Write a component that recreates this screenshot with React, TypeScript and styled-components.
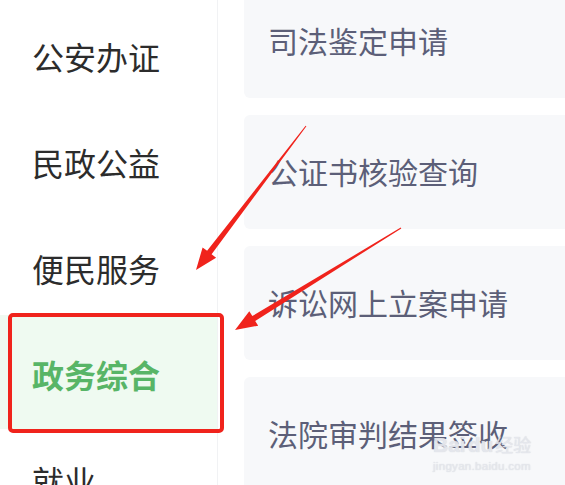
import React from "react";
import styled, { createGlobalStyle } from "styled-components";

const Global = createGlobalStyle`
  html, body { margin: 0; padding: 0; background: #ffffff; }
  body { width: 565px; height: 485px; overflow: hidden; font-family: "Noto Sans CJK SC", "Noto Sans", sans-serif; }
  #root { width: 565px; height: 485px; }
`;

const Page = styled.div`
  position: relative;
  display: flex;
  width: 565px;
  height: 485px;
  overflow: hidden;
  background: #ffffff;
`;

const Sidebar = styled.nav`
  flex: 0 0 217px;
  display: flex;
  flex-direction: column;
  padding-top: 5px;
  border-right: 1px solid #f1f2f4;
  background: #ffffff;
`;

const NavItem = styled.div<{ $active?: boolean }>`
  position: relative;
  display: flex;
  align-items: center;
  flex: 0 0 auto;
  height: ${(p) => (p.$active ? "114px" : "106px")};
  margin-top: ${(p) => (p.$active ? "-8px" : "0")};
  padding: ${(p) => (p.$active ? "8px 0 4px 32px" : "0 0 4px 32px")};
  box-sizing: border-box;
  font-size: 32px;
  line-height: 1;
  color: ${(p) => (p.$active ? "#58b567" : "#2c2c2c")};
  font-weight: ${(p) => (p.$active ? 600 : 400)};
  background: ${(p) => (p.$active ? "#effaf1" : "transparent")};
  white-space: nowrap;
`;

const RedFrame = styled.div`
  position: absolute;
  left: 8px;
  top: -2px;
  width: 216px;
  height: 120px;
  box-sizing: border-box;
  border: 4px solid #f0231c;
  border-radius: 5px;
  pointer-events: none;
`;

const Content = styled.main`
  flex: 1 1 auto;
  display: flex;
  flex-direction: column;
  gap: 17px;
  padding-left: 26px;
  margin-top: -16px;
`;

const Card = styled.div`
  flex: 0 0 114px;
  display: flex;
  align-items: center;
  box-sizing: border-box;
  padding: 0 0 3px 24px;
  background: #f7f8fa;
  border-radius: 6px 0 0 6px;
  font-size: 30px;
  line-height: 1;
  color: #5c5f78;
  white-space: nowrap;
`;

const Overlay = styled.svg`
  position: absolute;
  left: 0;
  top: 0;
  width: 565px;
  height: 485px;
  pointer-events: none;
`;

const Watermark = styled.div`
  position: absolute;
  left: 433px;
  top: 434px;
  display: flex;
  flex-direction: column;
  align-items: flex-start;
  color: rgba(232, 234, 240, 0.85);
  font-family: "Liberation Sans", Arial, sans-serif;
  text-shadow: 0 0 1px rgba(190, 192, 200, 0.7);
  pointer-events: none;
`;

const MarkTop = styled.div`
  display: flex;
  align-items: baseline;
  gap: 2px;
  font-size: 21px;
  font-weight: 700;
  line-height: 1;
`;

const MarkCn = styled.span`
  font-family: "Noto Sans CJK SC", sans-serif;
  font-size: 18px;
  font-weight: 400;
`;

const MarkUrl = styled.div`
  margin-top: 6px;
  font-size: 11.5px;
  line-height: 1;
  letter-spacing: 0.3px;
`;

function arrow(sx: number, sy: number, tx: number, ty: number, headLen: number, headHalf: number, shaftW: number) {
  const dx = tx - sx;
  const dy = ty - sy;
  const len = Math.hypot(dx, dy);
  const ux = dx / len;
  const uy = dy / len;
  const px = -uy;
  const py = ux;
  const bx = tx - ux * headLen;
  const by = ty - uy * headLen;
  const pts = [
    [sx + px * 0.5, sy + py * 0.5],
    [bx + px * shaftW, by + py * shaftW],
    [bx + px * headHalf, by + py * headHalf],
    [tx, ty],
    [bx - px * headHalf, by - py * headHalf],
    [bx - px * shaftW, by - py * shaftW],
    [sx - px * 0.5, sy - py * 0.5],
  ];
  return pts.map((p) => p.map((v) => v.toFixed(1)).join(",")).join(" ");
}

const navItems = ["公安办证", "民政公益", "便民服务", "政务综合", "就业"];
const cards = ["司法鉴定申请", "公证书核验查询", "诉讼网上立案申请", "法院审判结果签收"];

export default function App() {
  return (
    <>
      <Global />
      <Page>
        <Sidebar>
          {navItems.map((t) => (
            <NavItem key={t} $active={t === "政务综合"}>
              {t}
              {t === "政务综合" && <RedFrame />}
            </NavItem>
          ))}
        </Sidebar>
        <Content>
          {cards.map((c) => (
            <Card key={c}>{c}</Card>
          ))}
        </Content>
        <Watermark>
          <MarkTop>
            <span>Bai</span>
            <span>du</span>
            <MarkCn>经验</MarkCn>
          </MarkTop>
          <MarkUrl>jingyan.baidu.com</MarkUrl>
        </Watermark>
        <Overlay viewBox="0 0 565 485">
          <polygon points={arrow(306, 126, 196, 270, 22, 8.5, 2.8)} fill="#f0231c" />
          <polygon points={arrow(401, 228, 235, 330, 22, 8.5, 2.8)} fill="#f0231c" />
        </Overlay>
      </Page>
    </>
  );
}
